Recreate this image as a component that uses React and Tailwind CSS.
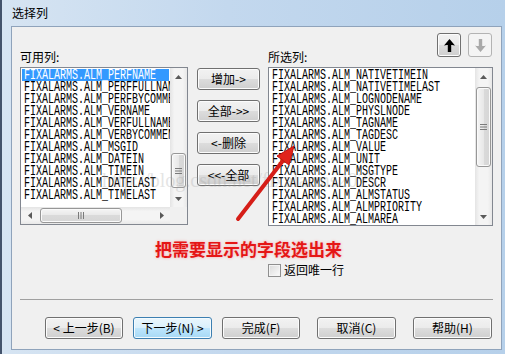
import React from "react";

const CJK = "font-['Noto_Sans_CJK_SC',sans-serif]";
const MONO = "font-['Liberation_Mono',monospace]";

function Tri({ dir }) {
  if (dir === "up")
    return (
      <svg width="7" height="4" viewBox="0 0 7 4">
        <polygon points="0,4 3.5,0 7,4" fill="#5a5a5a" />
      </svg>
    );
  if (dir === "down")
    return (
      <svg width="7" height="4" viewBox="0 0 7 4">
        <polygon points="0,0 3.5,4 7,0" fill="#5a5a5a" />
      </svg>
    );
  if (dir === "left")
    return (
      <svg width="4" height="7" viewBox="0 0 4 7">
        <polygon points="4,0 0,3.5 4,7" fill="#5a5a5a" />
      </svg>
    );
  return (
    <svg width="4" height="7" viewBox="0 0 4 7">
      <polygon points="0,0 4,3.5 0,7" fill="#5a5a5a" />
    </svg>
  );
}

function VThumb({ className }) {
  return (
    <div
      className={`${className} rounded-[3px] border border-[#979797] bg-[linear-gradient(90deg,#f5f5f5,#e8e8e8_50%,#dadada_50%,#d6d6d6)] shadow-[inset_0_0_0_1px_#fafafa] flex items-center justify-center`}
    >
      <svg width="7" height="6" viewBox="0 0 7 6">
        <rect x="0" y="0" width="7" height="1" fill="#7a7a7a" />
        <rect x="0" y="2.5" width="7" height="1" fill="#7a7a7a" />
        <rect x="0" y="5" width="7" height="1" fill="#7a7a7a" />
      </svg>
    </div>
  );
}

function HThumb({ className }) {
  return (
    <div
      className={`${className} rounded-[3px] border border-[#979797] bg-[linear-gradient(#f5f5f5,#e8e8e8_50%,#dadada_50%,#d6d6d6)] shadow-[inset_0_0_0_1px_#fafafa] flex items-center justify-center`}
    >
      <svg width="6" height="7" viewBox="0 0 6 7">
        <rect x="0" y="0" width="1" height="7" fill="#7a7a7a" />
        <rect x="2.5" y="0" width="1" height="7" fill="#7a7a7a" />
        <rect x="5" y="0" width="1" height="7" fill="#7a7a7a" />
      </svg>
    </div>
  );
}

function VScroll({ spacer, thumb }) {
  return (
    <div className="w-[17px] flex flex-col bg-[linear-gradient(90deg,#e4e4e4,#f4f4f4_25%,#f4f4f4_75%,#e8e8e8)]">
      <div className="h-[17px] flex items-center justify-center">
        <Tri dir="up" />
      </div>
      <div className="flex-1 flex flex-col px-[1px]">
        <div className={spacer} />
        <VThumb className={thumb} />
      </div>
      <div className="h-[17px] flex items-center justify-center">
        <Tri dir="down" />
      </div>
    </div>
  );
}

function Row({ text, selected }) {
  return (
    <div
      className={`h-[12px] pl-[2px] mr-[1px] whitespace-nowrap ${
        selected ? "bg-[#3399ff] text-white" : "text-black"
      }`}
    >
      <span className={`block origin-left scale-x-[0.714] text-[14px] leading-[13px] ${MONO}`}>{text}</span>
    </div>
  );
}

function Btn({ children, className, focused }) {
  return (
    <div
      className={`${className} flex items-center justify-center rounded-[3px] border text-[12px] text-black ${CJK} ${
        focused
          ? "border-[#3c7fb1] bg-[linear-gradient(#eaf6fd,#d9f0fc_50%,#bee6fd_50%,#a7d9f5)] shadow-[inset_0_0_0_1px_#f4fbfe]"
          : "border-[#707070] bg-[linear-gradient(#f2f2f2,#ebebeb_50%,#dddddd_50%,#cfcfcf)] shadow-[inset_0_0_0_1px_#fcfcfc]"
      }`}
    >
      {children}
    </div>
  );
}

const leftItems = [
  "FIXALARMS.ALM_PERFNAME",
  "FIXALARMS.ALM_PERFFULLNAME",
  "FIXALARMS.ALM_PERFBYCOMMENT",
  "FIXALARMS.ALM_VERNAME",
  "FIXALARMS.ALM_VERFULLNAME",
  "FIXALARMS.ALM_VERBYCOMMENT",
  "FIXALARMS.ALM_MSGID",
  "FIXALARMS.ALM_DATEIN",
  "FIXALARMS.ALM_TIMEIN",
  "FIXALARMS.ALM_DATELAST",
  "FIXALARMS.ALM_TIMELAST",
];

const rightItems = [
  "FIXALARMS.ALM_NATIVETIMEIN",
  "FIXALARMS.ALM_NATIVETIMELAST",
  "FIXALARMS.ALM_LOGNODENAME",
  "FIXALARMS.ALM_PHYSLNODE",
  "FIXALARMS.ALM_TAGNAME",
  "FIXALARMS.ALM_TAGDESC",
  "FIXALARMS.ALM_VALUE",
  "FIXALARMS.ALM_UNIT",
  "FIXALARMS.ALM_MSGTYPE",
  "FIXALARMS.ALM_DESCR",
  "FIXALARMS.ALM_ALMSTATUS",
  "FIXALARMS.ALM_ALMPRIORITY",
  "FIXALARMS.ALM_ALMAREA",
];

export default function App() {
  return (
    <div
      className={`relative w-[505px] h-[354px] overflow-hidden border-l-2 border-[#43536b] bg-[linear-gradient(90deg,#d6e4f2,#c3d8ee_45%,#b6d0ea)] ${CJK}`}
    >
      {/* title */}
      <div className="h-[26px] pl-[10px] pt-[4px] text-[12px] leading-[18px] text-black">选择列</div>

      {/* client */}
      <div className="ml-[9px] w-[491px] h-[324px] border border-[#8fa3bb] bg-[#f0f0f0] flex flex-col">
        <div className="flex pt-[6px]">
          {/* left column */}
          <div className="ml-[8px] w-[168px] flex flex-col">
            <div className="h-[34px] flex items-end pb-[3px] text-[12px] leading-[14px] text-black">可用列:</div>
            <div className="h-[158px] border border-[#828790] bg-white flex flex-col">
              <div className="flex-1 flex min-h-0">
                <div className="flex-1 pt-[1px] pl-[1px] overflow-hidden">
                  {leftItems.map((t, i) => (
                    <Row key={t} text={t} selected={i === 0} />
                  ))}
                </div>
                <VScroll spacer="h-[68px]" thumb="h-[35px]" />
              </div>
              <div className="h-[17px] flex">
                <div className="flex-1 flex bg-[linear-gradient(#e4e4e4,#f4f4f4_25%,#f4f4f4_75%,#e8e8e8)]">
                  <div className="w-[17px] flex items-center justify-center">
                    <Tri dir="left" />
                  </div>
                  <div className="flex-1 flex py-[1px]">
                    <div className="w-[2px]" />
                    <HThumb className="w-[82px]" />
                  </div>
                  <div className="w-[17px] flex items-center justify-center">
                    <Tri dir="right" />
                  </div>
                </div>
                <div className="w-[17px] bg-[#f0f0f0]" />
              </div>
            </div>
          </div>

          {/* middle buttons */}
          <div className="ml-[9px] w-[63px] mt-[35px] flex flex-col gap-[10px]">
            <Btn className="h-[22px]">增加-&gt;</Btn>
            <Btn className="h-[22px]">全部-&gt;&gt;</Btn>
            <Btn className="h-[22px]">&lt;-删除</Btn>
            <Btn className="h-[22px]">&lt;&lt;-全部</Btn>
          </div>

          {/* right column */}
          <div className="ml-[8px] w-[225px] flex flex-col">
            <div className="h-[34px] flex justify-between">
              <div className="self-end mb-[3px] text-[12px] leading-[14px] text-black">所选列:</div>
              <div className="flex gap-[7px] mr-[1px]">
                <div className="w-[24px] h-[24px] rounded-[3px] border border-[#707070] bg-[linear-gradient(#f2f2f2,#ebebeb_50%,#dddddd_50%,#cfcfcf)] shadow-[inset_0_0_0_1px_#fcfcfc] flex items-center justify-center">
                  <svg width="11" height="13" viewBox="0 0 11 13">
                    <path d="M5.5 0 L11 6.5 Q9 5.8 7.2 6 L7.2 13 L3.8 13 L3.8 6 Q2 5.8 0 6.5 Z" fill="#000" />
                  </svg>
                </div>
                <div className="w-[24px] h-[24px] rounded-[3px] border border-[#b3b3b3] bg-[#f4f4f4] flex items-center justify-center">
                  <svg width="11" height="13" viewBox="0 0 11 13">
                    <path d="M5.5 13 L11 6.5 Q9 7.2 7.2 7 L7.2 0 L3.8 0 L3.8 7 Q2 7.2 0 6.5 Z" fill="#a9a9a9" />
                  </svg>
                </div>
              </div>
            </div>
            <div className="h-[159px] border border-[#828790] bg-white flex">
              <div className="flex-1 pt-[1px] pl-[1px] overflow-hidden">
                {rightItems.map((t) => (
                  <Row key={t} text={t} />
                ))}
              </div>
              <VScroll spacer="h-[2px]" thumb="h-[80px]" />
            </div>
            <div className="mt-[37px] flex items-center gap-[3px]">
              <div className="w-[13px] h-[13px] border border-[#8f8f8f] bg-[linear-gradient(135deg,#dadada,#fbfbfb)] shadow-[inset_0_0_0_1px_#f4f4f4]" />
              <div className="text-[12px] leading-[14px] text-black">返回唯一行</div>
            </div>
          </div>
        </div>

        {/* separator */}
        <div className="mt-[22px] mx-[8px] h-px bg-[#a0a0a0]" />

        {/* bottom buttons */}
        <div className="mt-[17px] pl-[33px] flex">
          <Btn className="w-[78px] h-[22px]">&lt; 上一步(B)</Btn>
          <Btn className="ml-[10px] w-[79px] h-[22px]" focused>
            下一步(N) &gt;
          </Btn>
          <Btn className="ml-[10px] w-[78px] h-[22px]">完成(F)</Btn>
          <Btn className="ml-[17px] w-[79px] h-[22px]">取消(C)</Btn>
          <Btn className="ml-[17px] w-[79px] h-[22px]">帮助(H)</Btn>
        </div>
      </div>

      {/* watermark */}
      <div className="absolute left-[100px] top-[170px] text-[20px] leading-[20px] font-['Liberation_Serif',serif] text-[#9a9a9a] opacity-25 whitespace-nowrap pointer-events-none">
        http://blog.csdn.net/fixalarms2025
      </div>

      {/* red annotation text */}
      <div className="absolute left-[153px] top-[240px] text-[17px] leading-[18px] font-bold text-[#e51616] [text-shadow:0_0_3px_#f5a3a3] whitespace-nowrap">
        把需要显示的字段选出来
      </div>

      {/* red arrow */}
      <svg className="absolute left-0 top-0 pointer-events-none" width="505" height="354" viewBox="0 0 505 354">
        <line x1="236" y1="219" x2="283" y2="158" stroke="#d61e18" strokeWidth="4" strokeLinecap="round" />
        <polygon points="292,146 287,165 275,156" fill="#e0241c" stroke="#c0150f" strokeWidth="1" strokeLinejoin="round" />
      </svg>
    </div>
  );
}
